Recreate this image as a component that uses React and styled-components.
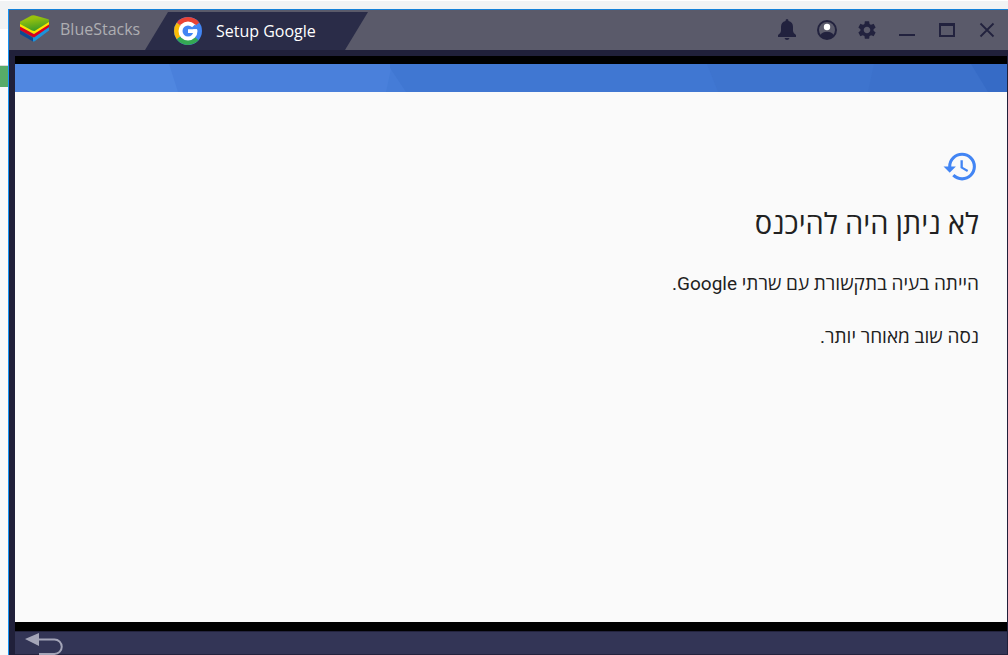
import React from "react"
import styled, { createGlobalStyle } from "styled-components"
import { MdHistory, MdSettings } from "react-icons/md"

const App = () => (
  <>
    <GlobalStyle />
    <Page>
      <BackgroundTop />
      <Row>
        <BackgroundSide>
          <GreenMark />
        </BackgroundSide>
        <Window>
          <TitleBar>
            <HomeTab type="button">
              <BlueStacksLogo />
              BlueStacks
            </HomeTab>
            <AppTab type="button">
              <GoogleLogo />
              Setup Google
            </AppTab>
            <Controls>
              <ControlButton type="button" aria-label="Notifications">
                <BellIcon />
              </ControlButton>
              <ControlButton type="button" aria-label="Account">
                <AccountIcon />
              </ControlButton>
              <ControlButton type="button" aria-label="Settings">
                <MdSettings size={22} />
              </ControlButton>
              <ControlButton type="button" aria-label="Minimize">
                <svg width="16" height="16" viewBox="0 0 16 16">
                  <path d="M0 12h16v2H0z" fill="currentColor" />
                </svg>
              </ControlButton>
              <ControlButton type="button" aria-label="Maximize">
                <svg width="16" height="16" viewBox="0 0 16 16">
                  <path
                    d="M0 1h16v14H0zM2 4v9h12V4z"
                    fill="currentColor"
                    fillRule="evenodd"
                  />
                </svg>
              </ControlButton>
              <ControlButton type="button" aria-label="Close">
                <svg width="16" height="16" viewBox="0 0 16 16">
                  <path
                    d="M1.500 1.500l13 13M14.500 1.500l-13 13"
                    stroke="currentColor"
                    strokeWidth="1.800"
                  />
                </svg>
              </ControlButton>
            </Controls>
          </TitleBar>
          <Screen>
            <Banner />
            <Content dir="rtl" lang="he">
              <MdHistory size={37} color="#4285f4" />
              <Heading>לא ניתן היה להיכנס</Heading>
              <Text>הייתה בעיה בתקשורת עם שרתי Google.</Text>
              <Text>נסה שוב מאוחר יותר.</Text>
            </Content>
          </Screen>
          <BottomBar>
            <BackButton type="button" aria-label="Back">
              <BackIcon />
            </BackButton>
          </BottomBar>
        </Window>
      </Row>
    </Page>
  </>
)

const BlueStacksLogo = () => (
  <svg width="30" height="28" viewBox="0 0 30 28">
    <defs>
      <linearGradient id="leaf" x1="0" y1="0" x2="0.300" y2="1">
        <stop offset="0.300" stopColor="#98c20c" />
        <stop offset="1" stopColor="#3f9d24" />
      </linearGradient>
    </defs>
    <path d="M0 15L13 23V26.500L0 19z" fill="#0b4a94" />
    <path d="M13 22L29 12V15.500L15 26Q14 26.700 13 26.500z" fill="#1b93dc" />
    <path d="M0 11L13 19L29 9V12L14 22.500L0 15z" fill="#d8001f" />
    <path d="M0 8L13 15L29 6V9.500L14 19L0 11.500z" fill="#ffe500" />
    <path
      d="M0 9V6.800L11.500 .6Q13 0 15 .4L28.500 4.200Q29.500 5 29 7L15 15.700Q14 16.300 12 15.500z"
      fill="url(#leaf)"
    />
  </svg>
)

const GoogleLogo = () => (
  <svg width="28" height="28" viewBox="0 0 28 28">
    <circle cx="14" cy="14" r="14" fill="#4285f4" />
    <path d="M14 14L2.700 5.800A14 14 0 0 1 25.300 5.800z" fill="#ea4335" />
    <path d="M14 14L2.700 5.800A14 14 0 0 0 2.700 22.200z" fill="#fbbc05" />
    <path d="M14 14L2.700 22.200A14 14 0 0 0 24.500 23.200z" fill="#34a853" />
    <circle cx="14" cy="14" r="9.500" fill="#fff" />
    <circle cx="14" cy="14" r="5.500" fill="#4285f4" />
    <path d="M17.500 10.800L21 7.500L25 12.300H14z" fill="#4285f4" />
    <path d="M14 12.300H23V16H14z" fill="#fff" />
  </svg>
)

const BellIcon = () => (
  <svg width="18" height="22" viewBox="0 0 18 22">
    <path
      d="M9 0Q10.500 0 10.500 2Q15 3.200 15 8V12Q15 14 18 16V18H0V16Q3 14 3 12V8Q3 3.200 7.500 2Q7.500 0 9 0zM6.500 19H11.500Q11 21 9 21T6.500 19z"
      fill="currentColor"
    />
  </svg>
)

const AccountIcon = () => (
  <svg width="20" height="20" viewBox="0 0 20 20">
    <circle
      cx="10"
      cy="10"
      r="9"
      fill="none"
      stroke="currentColor"
      strokeWidth="2"
    />
    <path
      d="M3.500 15Q5.500 11.800 10 11.800T16.500 15L15 17.500L10 19L5 17.500z"
      fill="currentColor"
    />
    <circle cx="10" cy="7" r="3.200" fill="#fff" />
  </svg>
)

const BackIcon = () => (
  <svg width="40" height="24" viewBox="0 0 40 24">
    <path d="M0 7L14 1V14z" fill="#a4a5b8" />
    <path
      d="M13 7.500H29.500A7.200 7.200 0 0 1 29.500 22H14"
      fill="none"
      stroke="#a4a5b8"
      strokeWidth="2"
    />
  </svg>
)

// faceted strip at the top of the setup screen
const Banner = () => (
  <BannerSvg viewBox="0 0 992 28" preserveAspectRatio="none">
    <path d="M0 0h992v28H0z" fill="#5087e0" />
    <path d="M154 0H992V28H163z" fill="#4a80db" />
    <path d="M377 0H992V28H371z" fill="#457cd7" />
    <path d="M375 0H992V28H391L375 4z" fill="#4077d2" />
    <path d="M692 0H992V28H703z" fill="#3e74ce" />
    <path d="M859 0H992V28H853z" fill="#3c71cb" />
    <path d="M956 0H992V28H973z" fill="#366bc6" />
  </BannerSvg>
)

export default App

const GlobalStyle = createGlobalStyle`
  * {
    box-sizing: border-box;
  }
  body {
    margin: 0;
  }
  button {
    border: 0;
    padding: 0;
    background: none;
    font: inherit;
    color: inherit;
  }
  svg {
    display: block;
    flex-shrink: 0;
  }
`

const Page = styled.div`
  display: flex;
  flex-direction: column;
  min-height: 100vh;
  font-family: "Open Sans", "Noto Sans", sans-serif;
`

const BackgroundTop = styled.div`
  height: 9px;
  background: #f1f3f4;
  border-top: 1px solid #fff;
`

const Row = styled.div`
  display: flex;
  flex: 1;
`

const BackgroundSide = styled.div`
  width: 8px;
  padding-top: 56px;
  background: linear-gradient(#f1f3f4 20px, #fff 20px, #fff 56px, #f8f9fa 56px);
`

const GreenMark = styled.div`
  height: 22px;
  background: #57ab69;
  border-top: 1px solid #dadada;
`

const Window = styled.div`
  display: flex;
  flex-direction: column;
  flex: 1;
  background: #20203a;
  border-top: 1px solid #1581d8;
  border-left: 1px solid #1593f5;
`

const TitleBar = styled.header`
  display: flex;
  height: 40px;
  padding-right: 1px;
  background: #5a5a6a;
  color: #22223e;
`

const HomeTab = styled.button`
  display: flex;
  align-items: center;
  gap: 10px;
  width: 136px;
  padding: 0 0 2px 11px;
  font-size: 16px;
  color: #aeaeb2;
  white-space: nowrap;
`

const AppTab = styled.button`
  display: flex;
  align-items: center;
  gap: 14px;
  width: 223px;
  margin-top: 2px;
  padding-left: 29px;
  background: #2a2c48;
  clip-path: polygon(23px 0, 100% 0, calc(100% - 23px) 100%, 0 100%);
  font-size: 16px;
  color: #fff;
  white-space: nowrap;
`

const Controls = styled.div`
  display: flex;
  margin-left: auto;
`

const ControlButton = styled.button`
  display: flex;
  align-items: center;
  justify-content: center;
  width: 40px;
`

const Screen = styled.main`
  display: flex;
  flex-direction: column;
  flex: 1;
  margin: 6px 1px 0 6px;
  border: solid #000;
  border-width: 8px 0 9px;
  background: #fafafa;
`

const BannerSvg = styled.svg`
  width: 100%;
  height: 28px;
`

const Content = styled.section`
  padding: 56px 28px 0;
  color: #212121;
  font-family: Roboto, "Open Sans", sans-serif;
`

const Heading = styled.h1`
  margin: 20px 0 0;
  font-size: 29px;
  font-weight: 400;
  line-height: 38px;
`

const Text = styled.p`
  margin: 28px 0 0;
  font-size: 19px;
  line-height: 25px;
`

const BottomBar = styled.footer`
  display: flex;
  height: 24px;
  margin: 0 1px 0 6px;
  padding-left: 10px;
  background: #333556;
  border: solid #23233e;
  border-width: 1px 0;
`

const BackButton = styled.button`
  display: flex;
`
